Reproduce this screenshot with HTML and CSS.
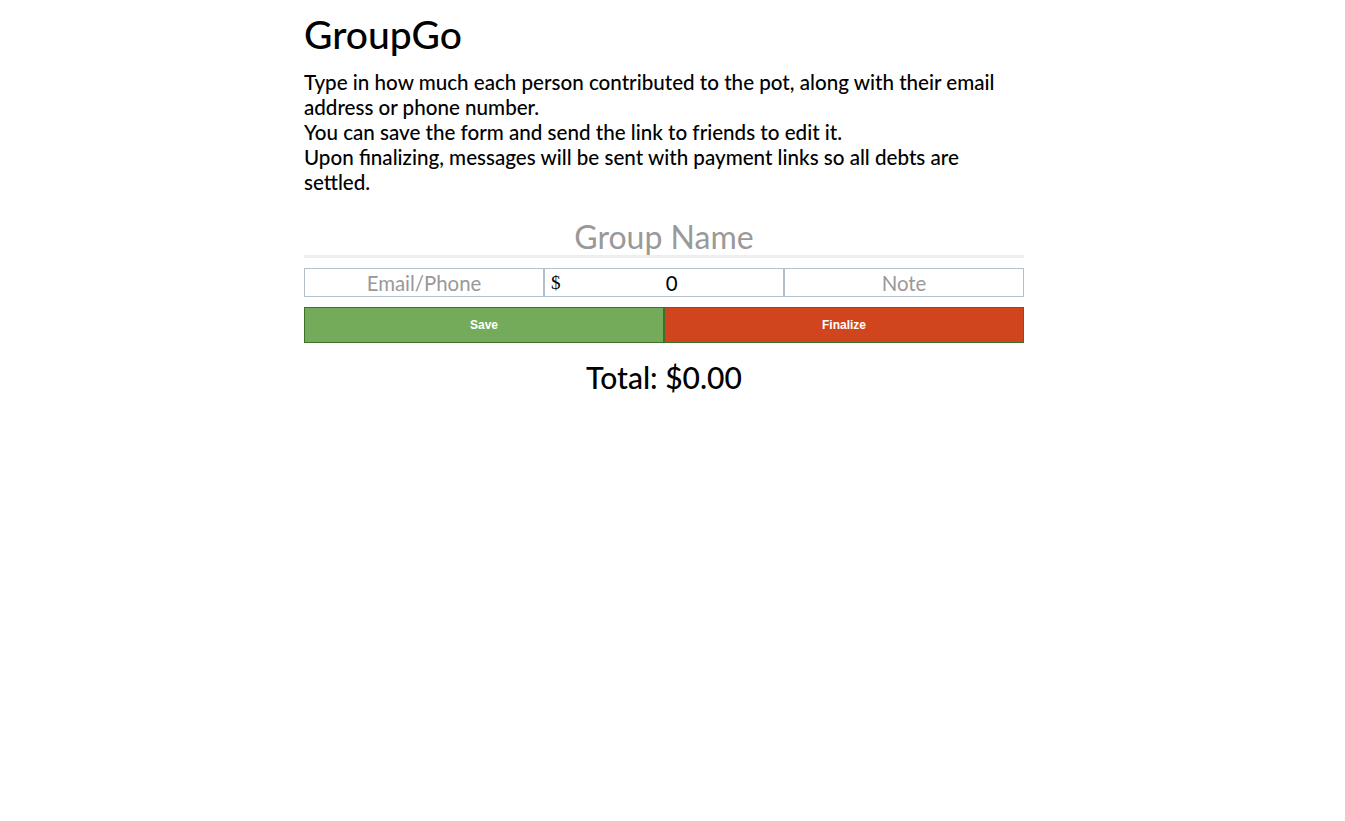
FILE: index.html
```html
<!DOCTYPE html>
<html>
<head>
<meta charset="utf-8">
<title>GroupGo</title>
<link rel="stylesheet" href="styles.css">
</head>
<body>
<main class="page">
  <h1 class="title">GroupGo</h1>
  <p class="intro">Type in how much each person contributed to the pot, along with their email address or phone number.<br>You can save the form and send the link to friends to edit it.<br>Upon finalizing, messages will be sent with payment links so all debts are settled.</p>
  <input class="group-name" type="text" placeholder="Group Name">
  <div class="row">
    <input class="cell" type="text" placeholder="Email/Phone">
    <div class="cell money"><span class="dollar">$</span><input class="amount" type="text" value="0"></div>
    <input class="cell" type="text" placeholder="Note">
  </div>
  <div class="actions">
    <button class="btn save">Save</button>
    <button class="btn finalize">Finalize</button>
  </div>
  <div class="total">Total: $0.00</div>
</main>
</body>
</html>
```
FILE: styles.css
```css
html, body { margin: 0; padding: 0; background: #fff; }
body { font-family: Lato, "Noto Sans", sans-serif; color: #000; padding-right: 17px; }
.page { width: 720px; margin: 0 auto; padding-top: 11px; display: flex; flex-direction: column; }
.title { font-size: 39px; font-weight: 500; margin: 0; line-height: 47px; }
.intro { font-size: 20.6px; line-height: 25px; margin: 12px 0 0; font-weight: 500; }
.group-name { margin-top: 22px; height: 38px; border: 0; border-bottom: 3px solid #eeeeee; font-family: inherit; font-size: 32px; text-align: center; padding: 0; outline: none; }
.group-name::placeholder, .cell::placeholder { color: #999; }
.row { display: flex; margin-top: 10px; height: 29px; }
.cell { box-sizing: border-box; width: 240px; height: 29px; border: 1px solid #b3c0cc; font-family: inherit; font-size: 20.4px; text-align: center; padding: 0; margin: 0; outline: none; }
.money { display: flex; align-items: center; padding-left: 6px; }
.dollar { font-family: "Liberation Serif", serif; font-size: 19px; line-height: 1; }
.amount { flex: 1; border: 0; font-family: inherit; font-size: 20.4px; text-align: center; padding: 0; outline: none; min-width: 0; height: 100%; background: transparent; }
.actions { display: flex; margin-top: 10px; }
.btn { box-sizing: border-box; width: 360px; height: 36px; border: 1px solid #3a7229; color: #fff; font-family: "Liberation Sans", Arial, sans-serif; font-weight: bold; font-size: 12px; margin: 0; padding: 0; }
.save { background: #73ab5a; }
.finalize { background: #d1451e; }
.total { text-align: center; font-size: 30px; font-weight: 500; margin-top: 16px; }
```
